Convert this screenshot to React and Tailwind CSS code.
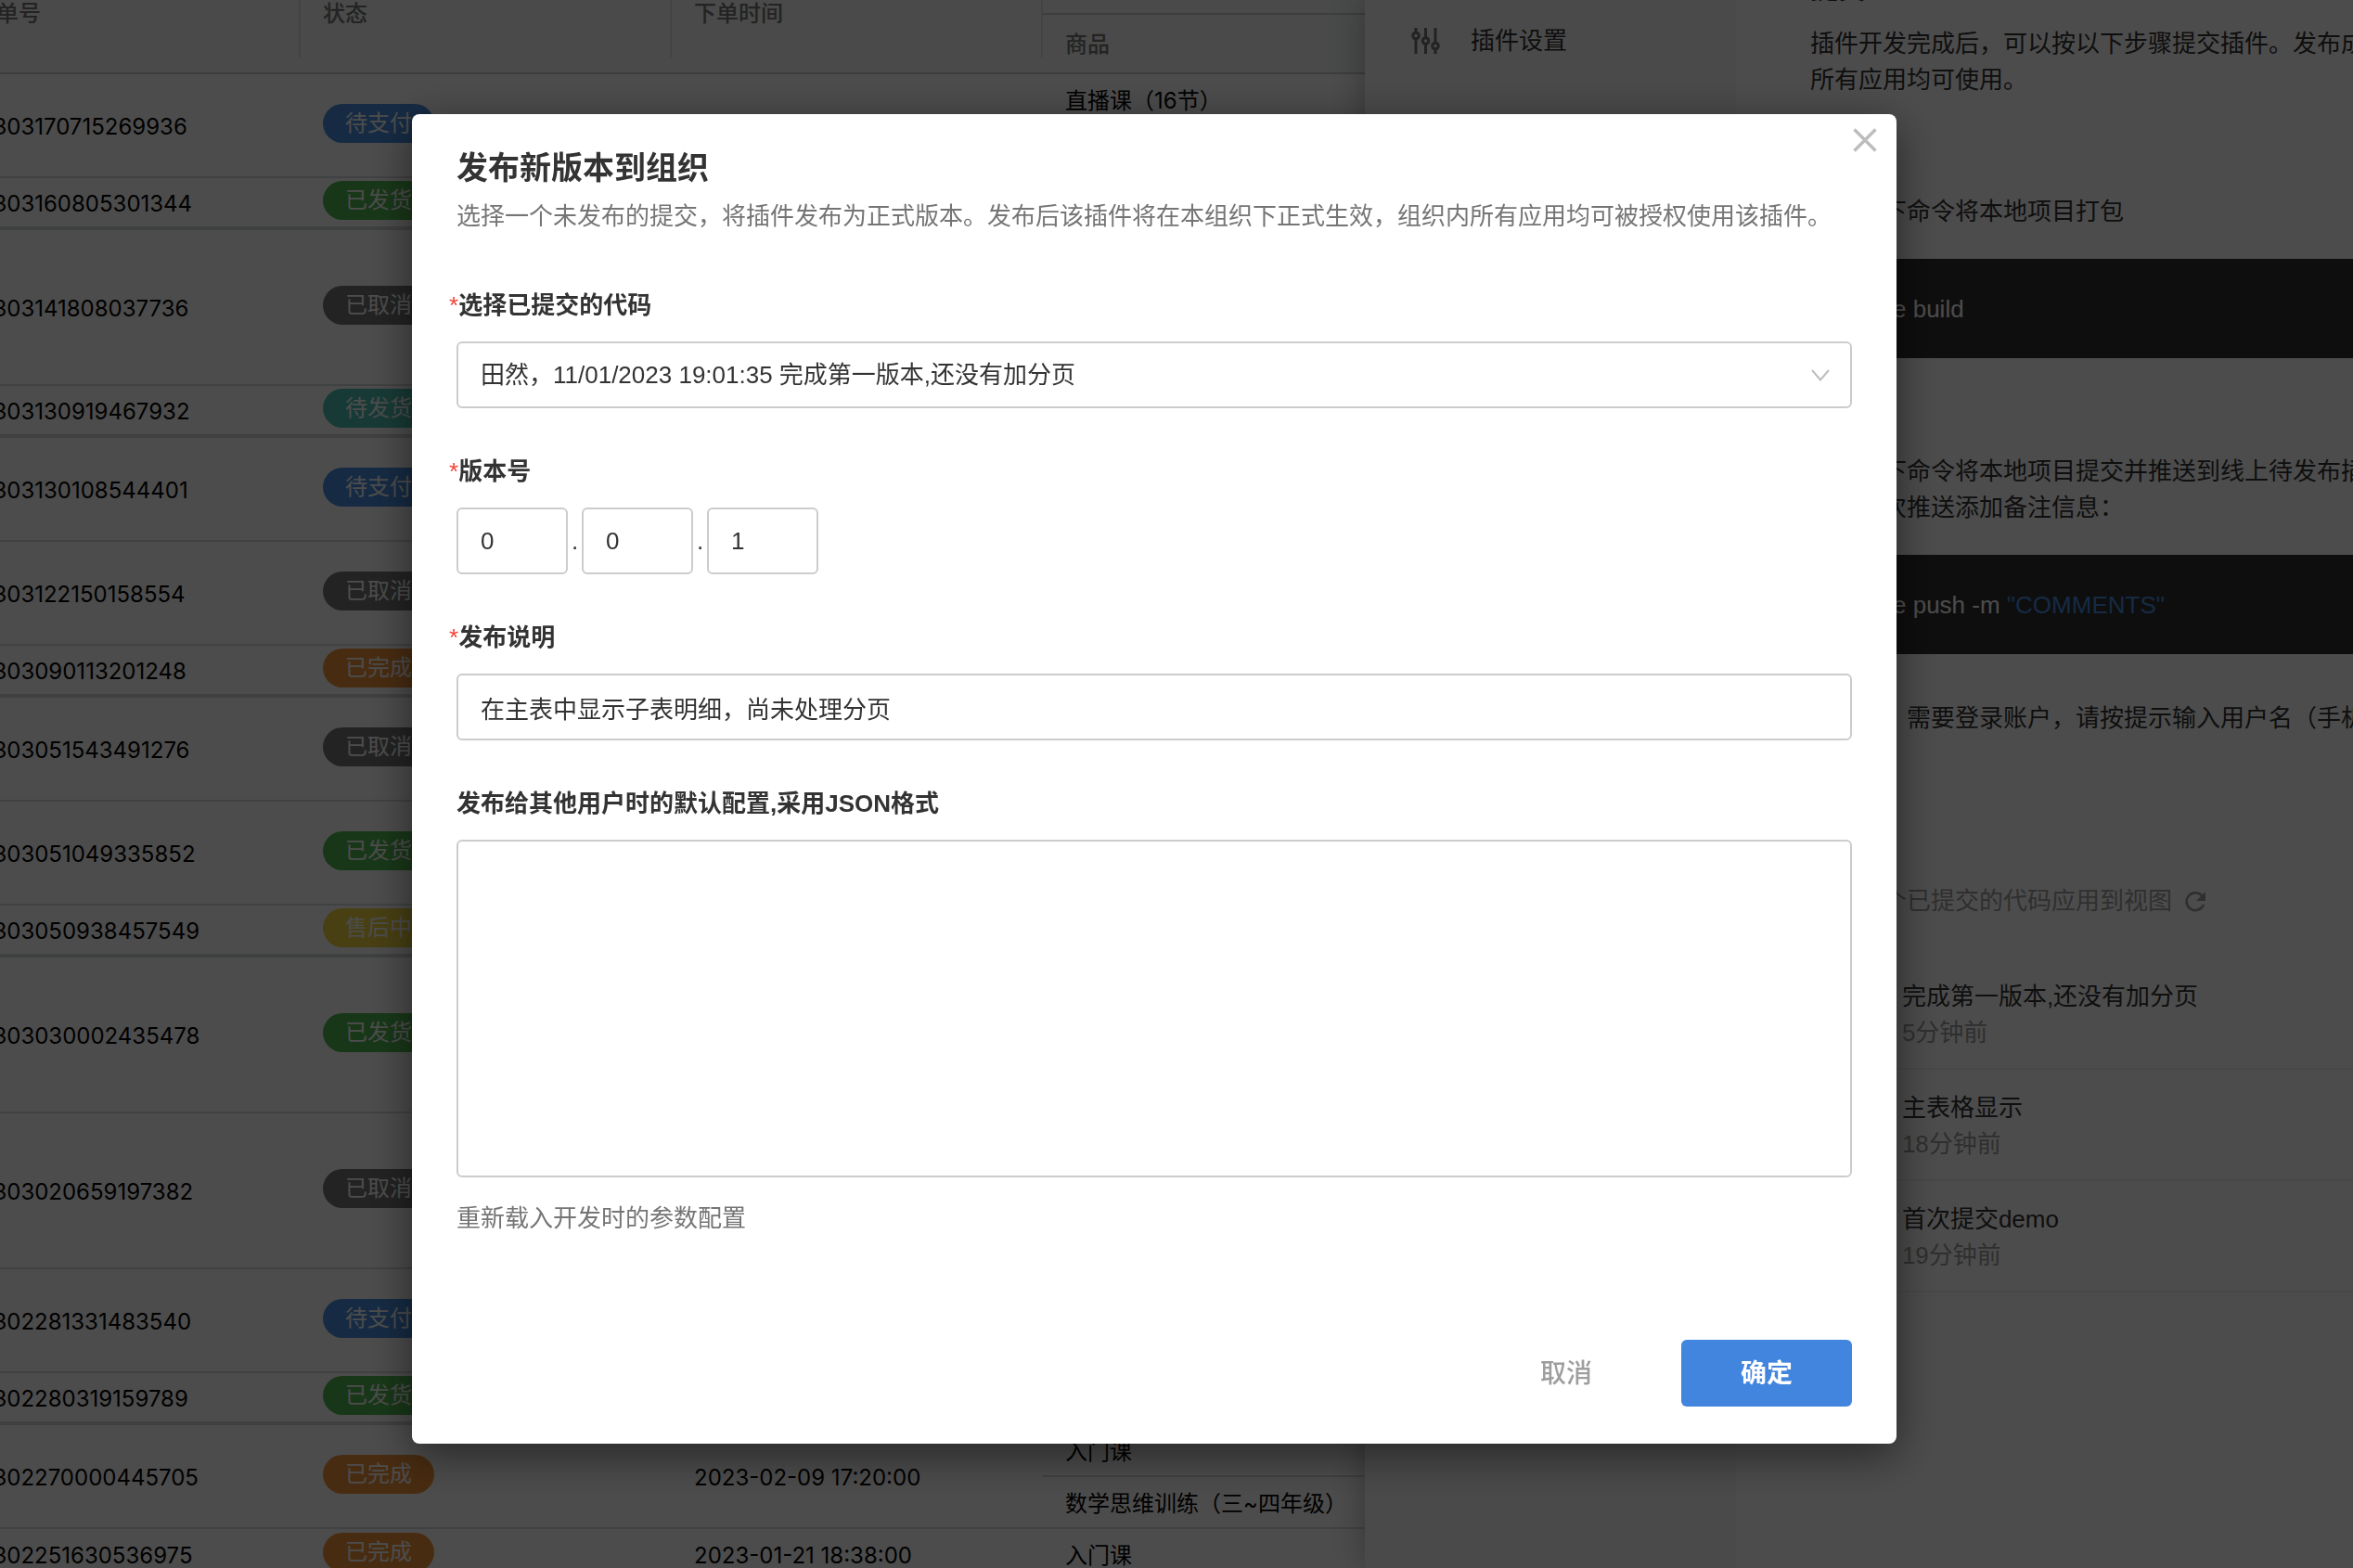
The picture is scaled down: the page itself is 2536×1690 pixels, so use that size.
import React, { useState } from "react";

const statusColors = {
  待支付: "bg-[#4a90e2]",
  已发货: "bg-[#53ba53]",
  已取消: "bg-[#757575]",
  待发货: "bg-[#4fc4b4]",
  已完成: "bg-[#f0933a]",
  售后中: "bg-[#f0d540]",
};

const orders = [
  { no: "202303170715269936", status: "待支付", time: "2023-03-17 07:15:00", items: ["直播课（16节）", "入门课"] },
  { no: "202303160805301344", status: "已发货", time: "2023-03-16 08:05:00", items: ["入门课"], last: true },
  { no: "202303141808037736", status: "已取消", time: "2023-03-14 18:08:00", items: ["直播课（16节）", "入门课", "入门课"] },
  { no: "202303130919467932", status: "待发货", time: "2023-03-13 09:19:00", items: ["入门课"], last: true },
  { no: "202303130108544401", status: "待支付", time: "2023-03-13 01:08:00", items: ["直播课（16节）", "入门课"] },
  { no: "202303122150158554", status: "已取消", time: "2023-03-12 21:50:00", items: ["直播课（16节）", "入门课"] },
  { no: "202303090113201248", status: "已完成", time: "2023-03-09 01:13:00", items: ["入门课"], last: true },
  { no: "202303051543491276", status: "已取消", time: "2023-03-05 15:43:00", items: ["直播课（16节）", "入门课"] },
  { no: "202303051049335852", status: "已发货", time: "2023-03-05 10:49:00", items: ["直播课（16节）", "入门课"] },
  { no: "202303050938457549", status: "售后中", time: "2023-03-05 09:38:00", items: ["入门课"], last: true },
  { no: "202303030002435478", status: "已发货", time: "2023-03-03 00:02:00", items: ["直播课（16节）", "入门课", "入门课"] },
  { no: "202303020659197382", status: "已取消", time: "2023-03-02 06:59:00", items: ["直播课（16节）", "入门课", "入门课"] },
  { no: "202302281331483540", status: "待支付", time: "2023-02-28 13:31:00", items: ["直播课（16节）", "入门课"] },
  { no: "202302280319159789", status: "已发货", time: "2023-02-28 03:19:00", items: ["入门课"], last: true },
  { no: "202302270000445705", status: "已完成", time: "2023-02-09 17:20:00", items: ["入门课", "数学思维训练（三~四年级）"] },
  { no: "202302251630536975", status: "已完成", time: "2023-01-21 18:38:00", items: ["入门课"] },
];

const commits = [
  { title: "完成第一版本,还没有加分页", time: "5分钟前" },
  { title: "主表格显示", time: "18分钟前" },
  { title: "首次提交demo", time: "19分钟前" },
];

function HeadCell({ children }) {
  return (
    <th rowSpan={2} className="border-b-2 border-[#c8d0cc] p-0 text-left font-medium">
      <div className="flex h-[130px] flex-col">
        <div className="flex flex-1 items-center border-r-2 border-[#dce4e0] pt-5">{children}</div>
        <div className="h-4" />
      </div>
    </th>
  );
}

function OrderRow({ order }) {
  const line = order.last ? "border-b-4 border-[#d2d5d8]" : "border-b-2 border-[#d8dadc]";
  return (
    <tr className="align-middle">
      <td className={`${line} px-6 pt-1 pb-0`}>{order.no}</td>
      <td className={`${line} px-6 pt-0 pb-1`}>
        <span className={`inline-flex h-[42px] items-center rounded-full px-6 align-middle text-white ${statusColors[order.status]}`}>
          {order.status}
        </span>
      </td>
      <td className={`${line} px-6 pt-1 pb-0`}>{order.time}</td>
      <td className="p-0">
        {order.items.map((item, i) => (
          <div
            key={i}
            className={`flex h-14 items-center px-6 pt-1 ${i === order.items.length - 1 ? line : "border-b-2 border-[#d8dadc]"}`}
          >
            {item}
          </div>
        ))}
      </td>
    </tr>
  );
}

function OrdersTable() {
  return (
    <table className="-mt-[52px] -ml-[76px] w-[1600px] table-fixed border-separate border-spacing-0 font-[Inter,'Noto_Sans_CJK_SC',sans-serif] text-2xl text-black">
      <thead className="bg-[#f3f9f6] text-[#757575]">
        <tr className="h-[68px]">
          <HeadCell><span className="pl-12">订单号</span></HeadCell>
          <HeadCell><span className="pl-6">状态</span></HeadCell>
          <HeadCell><span className="pl-6">下单时间</span></HeadCell>
          <th className="border-b-2 border-[#c8d0cc] p-0" />
        </tr>
        <tr className="h-16">
          <th className="border-b-2 border-[#c8d0cc] px-6 pt-0.5 pb-0 text-left font-medium">商品</th>
        </tr>
      </thead>
      <tbody>
        {orders.map((order) => (
          <OrderRow key={order.no} order={order} />
        ))}
      </tbody>
    </table>
  );
}

function SlidersIcon() {
  return (
    <svg width="32" height="28" viewBox="0 0 32 28" fill="none" stroke="currentColor" strokeWidth="3">
      <path d="M5 0v5M5 12v16M15.500 0v10.500M15.500 17.500v10.500M26 0v16M26 23v5" />
      <circle cx="5" cy="8.500" r="3.300" />
      <circle cx="15.500" cy="14" r="3.300" />
      <circle cx="26" cy="19.500" r="3.300" />
    </svg>
  );
}

function RefreshIcon() {
  return (
    <svg width="22" height="22" viewBox="0 0 22 22">
      <path d="M18.400 4.500A9.500 9.500 0 1 0 20 14" fill="none" stroke="currentColor" strokeWidth="2.600" />
      <path d="M22 0v10h-10z" fill="currentColor" />
    </svg>
  );
}

function CodeBlock({ children }) {
  return (
    <pre className="flex h-[107px] items-center bg-[#303030] px-10 pt-0.5 font-[Liberation_Sans,'Noto_Sans_CJK_SC',sans-serif] text-white">
      <code className="font-[inherit]">{children}</code>
    </pre>
  );
}

function PluginDrawer() {
  return (
    <aside className="absolute inset-y-0 right-0 flex w-[42%] bg-white text-[#333] shadow-[0_0_36px_rgba(0,0,0,0.3)]">
      <nav className="w-[400px] shrink-0 bg-[#f8f8f8] pt-6">
        <a href="#settings" className="flex h-10 items-center gap-8 pl-[50px]">
          <span className="text-[#757575]"><SlidersIcon /></span>
          插件设置
        </a>
      </nav>
      <div className="min-w-0 flex-1 overflow-hidden pl-20 whitespace-nowrap">
        <h2 className="-mt-8 text-[30px] leading-10 font-semibold">提交</h2>
        <p className="mt-5">
          插件开发完成后，可以按以下步骤提交插件。发布成功后，组织下
          <br />
          所有应用均可使用。
        </p>
        <p className="mt-[103px]">使用以下命令将本地项目打包</p>
        <div className="mt-[31px]"><CodeBlock>mdye build</CodeBlock></div>
        <p className="mt-[103px]">
          使用以下命令将本地项目提交并推送到线上待发布插件列表
          <br />
          请为每次推送添加备注信息：
        </p>
        <div className="mt-[31px]">
          <CodeBlock>
            mdye push -m <span className="text-[#4a90e2]">"COMMENTS"</span>
          </CodeBlock>
        </div>
        <p className="mt-[50px]">推送时，需要登录账户，请按提示输入用户名（手机号或邮箱）</p>
        <div className="mt-[158px] flex items-center gap-3.5 text-[#9e9e9e]">
          选择一个已提交的代码应用到视图
          <button type="button" aria-label="刷新"><RefreshIcon /></button>
        </div>
        <ul className="mt-[42px]">
          {commits.map((commit) => (
            <li key={commit.title} className="h-[120px] border-b-2 border-[#f0f0f0] pt-[22px] pl-[99px]">
              <p>{commit.title}</p>
              <p className="text-[#9e9e9e]">{commit.time}</p>
            </li>
          ))}
        </ul>
      </div>
    </aside>
  );
}

function Label({ htmlFor, required, children }) {
  return (
    <label htmlFor={htmlFor} className="mb-[19px] block leading-10 font-semibold text-[#333]">
      {required && <span className="-ml-2 font-normal text-[#f44336]">*</span>}
      {children}
    </label>
  );
}

const fieldClass = "h-[72px] rounded-md border-2 border-[#ccc] bg-white px-6 text-[#333] outline-none";

function PublishDialog() {
  const [version, setVersion] = useState(["0", "0", "1"]);
  const [note, setNote] = useState("在主表中显示子表明细，尚未处理分页");
  const [config, setConfig] = useState("");

  const changeVersion = (index, value) => {
    setVersion((prev) => prev.map((v, i) => (i === index ? value : v)));
  };

  return (
    <form
      role="dialog"
      aria-labelledby="publish-title"
      className="relative w-full max-w-[1600px] rounded-lg bg-white px-12 pt-[34px] pb-10 shadow-[0_12px_48px_rgba(0,0,0,0.5)]"
    >
      <button type="button" aria-label="关闭" className="absolute top-[15px] right-[21px] text-[#bdbdbd]">
        <svg width="26" height="26" viewBox="0 0 26 26" fill="none" stroke="currentColor" strokeWidth="3.500">
          <path d="M1.500 1.500l23 23M24.500 1.500l-23 23" />
        </svg>
      </button>

      <h1 id="publish-title" className="text-[34px] leading-[48px] font-semibold text-[#333]">发布新版本到组织</h1>
      <p className="mt-2 leading-10 text-[#757575]">
        选择一个未发布的提交，将插件发布为正式版本。发布后该插件将在本组织下正式生效，组织内所有应用均可被授权使用该插件。
      </p>

      <div className="mt-14 flex flex-col gap-12">
        <div>
          <Label htmlFor="commit" required>选择已提交的代码</Label>
          <div className="relative">
            <select id="commit" className={`${fieldClass} block w-full appearance-none`}>
              <option>田然，11/01/2023 19:01:35 完成第一版本,还没有加分页</option>
            </select>
            <svg className="pointer-events-none absolute top-[30px] right-6" width="20" height="13" viewBox="0 0 20 13" fill="none" stroke="#bdbdbd" strokeWidth="2">
              <path d="M1 1l9 10.500 9-10.500" />
            </svg>
          </div>
        </div>

        <div>
          <Label htmlFor="version-0" required>版本号</Label>
          <div className="flex items-center">
            {version.map((value, i) => (
              <React.Fragment key={i}>
                {i > 0 && <span className="w-[15px] text-center text-[#333]">.</span>}
                <input
                  id={`version-${i}`}
                  aria-label={`版本号 ${i + 1}`}
                  value={value}
                  onChange={(e) => changeVersion(i, e.target.value)}
                  className={`${fieldClass} w-[120px]`}
                />
              </React.Fragment>
            ))}
          </div>
        </div>

        <div>
          <Label htmlFor="note" required>发布说明</Label>
          <input id="note" value={note} onChange={(e) => setNote(e.target.value)} className={`${fieldClass} block w-full`} />
        </div>

        <div>
          <Label htmlFor="config">发布给其他用户时的默认配置,采用JSON格式</Label>
          <textarea
            id="config"
            value={config}
            onChange={(e) => setConfig(e.target.value)}
            className="block h-[364px] w-full resize-none rounded-md border-2 border-[#ccc] px-6 py-4 outline-none"
          />
          <a href="#reload" className="mt-6 inline-block leading-10 text-[#757575]">重新载入开发时的参数配置</a>
        </div>
      </div>

      <div className="mt-[111px] flex justify-end gap-8 text-[28px] font-semibold">
        <button type="button" className="h-[72px] w-[184px] font-medium text-[#9e9e9e]">取消</button>
        <button type="submit" className="h-[72px] w-[184px] rounded-md bg-[#4285de] text-white">确定</button>
      </div>
    </form>
  );
}

export default function App() {
  return (
    <div className="relative h-screen overflow-hidden bg-white font-[Liberation_Sans,'Noto_Sans_CJK_SC',sans-serif] text-[26px] leading-[39px]">
      <OrdersTable />
      <PluginDrawer />
      <div className="fixed inset-0 flex items-start justify-center bg-black/70 pt-[123px] pr-12">
        <PublishDialog />
      </div>
    </div>
  );
}
